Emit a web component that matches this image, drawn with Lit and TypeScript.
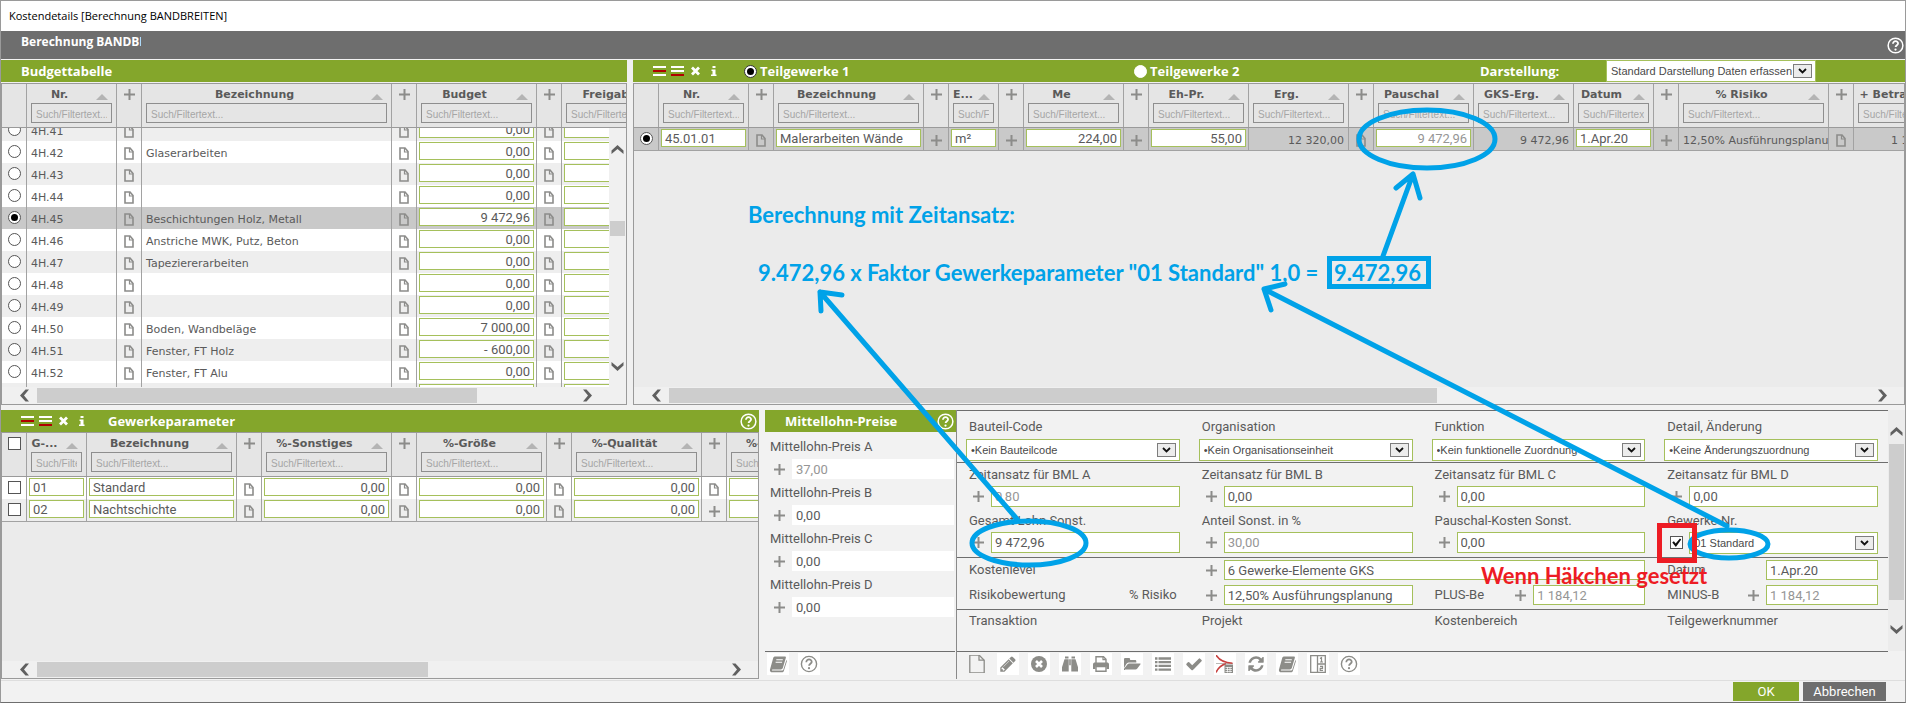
import { LitElement, html, css, svg, nothing, type TemplateResult } from 'lit';
import { customElement, property } from 'lit/decorators.js';
import { classMap } from 'lit/directives/class-map.js';

/* ---------- icons ---------- */

const plusIcon = html`<svg class="plus" viewBox="0 0 11 11" width="11" height="11" aria-hidden="true"><path d="M5.500 0v11M0 5.500h11" stroke="#8c8c8a" stroke-width="2"/></svg>`;

const docIcon = html`<svg class="doc" viewBox="0 0 10 13" width="10" height="13" aria-hidden="true"><path d="M1 1h5l3 3.500V12H1z" fill="none" stroke="#8c8c8a" stroke-width="1.600"/><path d="M5.500 1v4H9" fill="none" stroke="#8c8c8a" stroke-width="1.200"/></svg>`;

const sortIcon = html`<svg class="sort" viewBox="0 0 12 6" width="12" height="6" aria-hidden="true"><path d="M0 6L6 0l6 6z" fill="#b4b4b4"/></svg>`;

const helpIcon = (color: string, size: number) => html`<svg viewBox="0 0 18 18" width=${size} height=${size} aria-hidden="true">
  <circle cx="9" cy="9" r="7.800" fill="none" stroke=${color} stroke-width="1.600"/>
  <path d="M6.300 7.200c0-3.800 5.600-3.400 5.400-.3-.1 1.800-2.600 1.900-2.600 3.800" fill="none" stroke=${color} stroke-width="1.900"/>
  <circle cx="9" cy="13.300" r="1.200" fill=${color}/></svg>`;

const chevron = (dir: 'left' | 'right' | 'up' | 'down') => {
  const turn = { left: 0, up: 90, right: 180, down: 270 }[dir];
  return html`<svg viewBox="0 0 13 13" width="13" height="13" aria-hidden="true"><path transform="rotate(${turn} 6.500 6.500)" d="M7.500 .5h3.500L6 6.500l5 6H7.500L2 6.500z" fill="#606060"/></svg>`;
};

const headTools = html`
  <button class="tool" aria-label="Zeile oberhalb einfügen"><svg viewBox="0 0 13 10" width="13" height="10"><path d="M0 1h13M0 9h13" stroke="#fff" stroke-width="2"/><path d="M0 5h13" stroke="#b00000" stroke-width="2"/></svg></button>
  <button class="tool" aria-label="Zeile unterhalb einfügen"><svg viewBox="0 0 13 10" width="13" height="10"><path d="M0 1h13M0 5h13" stroke="#fff" stroke-width="2"/><path d="M0 9h13" stroke="#b00000" stroke-width="2"/></svg></button>
  <button class="tool" aria-label="Löschen"><svg viewBox="0 0 11 10" width="13" height="10"><path d="M2 1.500l7 7M9 1.500l-7 7" stroke="#fff" stroke-width="2.800"/></svg></button>
  <button class="tool" aria-label="Info"><svg viewBox="0 0 13 10" width="13" height="10"><path d="M5.500 0h3v2h-3zM4.500 3.500h4V8.500h1V10h-5.500V8.500h1.500V5H4.500z" fill="#fff"/></svg></button>`;

const G = '#8c8c88';
const fa = (d: string) => svg`<g transform="scale(.01005)"><path d=${d} fill=${G}/></g>`;
const book = svg`<path d="M6.300 1.500h9.500c.9 0 1.300.6 1 1.500l-3 10c-.3.900-1 1.400-2 1.400H3.600c-1 0-.9 1.200 0 1.200h9.500c.7 0 1.100-.4 1.300-1l3-9.600c.5.400.6.900.4 1.500l-2.900 9.200c-.3 1-1.100 1.500-2 1.500H3.200C1.600 17.200.6 16 1 14.500L4.200 3c.3-1 1-1.500 2.100-1.500z" fill=${G}/><path d="M7.300 4.700h6.500M6.600 7.200h6.500" stroke="#fff" stroke-width="1.100"/>`;
const help = svg`<circle cx="9" cy="9" r="7.600" fill="none" stroke=${G} stroke-width="1.400"/><path d="M6.300 7.200c0-3.800 5.600-3.400 5.400-.3-.1 1.800-2.600 1.900-2.600 3.800" fill="none" stroke=${G} stroke-width="1.800"/><circle cx="9" cy="13.200" r="1.100" fill=${G}/>`;

const toolIcons: Record<string, unknown> = {
  Handbuch: book,
  Hilfe: help,
  Neu: svg`<path d="M1.800 0h9.200l5.200 5.200V18H1.800z" fill="#f2f2f2" stroke=${G} stroke-width="1.300"/><path d="M11 0v5.200h5.200" fill="none" stroke=${G} stroke-width="1.300"/>`,
  Bearbeiten: fa('M491 1536l91-91-235-235-91 91v107h128v128h107zm523-928q0-22-22-22-10 0-17 7l-542 542q-7 7-7 17 0 22 22 22 10 0 17-7l542-542q7-7 7-17zm-54-192l416 416-832 832h-416v-416zm683 96q0 53-37 90l-166 166-416-416 166-165q36-38 90-38 53 0 91 38l235 234q37 39 37 91z'),
  Verwerfen: svg`<circle cx="9" cy="9" r="8" fill=${G}/><path d="M6 6l6 6M12 6l-6 6" stroke="#fff" stroke-width="2.600"/>`,
  Suchen: svg`<path d="M4 1.500h3.500V3.500H4zM10.500 1.500H14V3.500h-3.500zM3.500 4.300h4.200V16.500H1v-4.200zM10.300 4.300h4.200L17 12.300v4.200h-6.700zM8.200 4.300h1.600v6H8.200z" fill=${G}/>`,
  Drucken: svg`<path d="M4 8V1.700h7.500L14 4.200V8" fill="#fff" stroke=${G} stroke-width="1.400"/><path d="M11 1.700v3h3" fill="none" stroke=${G} stroke-width="1.200"/><path d="M1 9.500C1 8 2 7.500 3 7.500h12c1 0 2 .5 2 2V14h-2.500v-2.500h-11V14H1z" fill=${G}/><path d="M4 11.500h10v4.800H4z" fill="#fff" stroke=${G} stroke-width="1.400"/>`,
  Öffnen: svg`<path d="M1 13V4.300C1 3.300 1.600 3 2.300 3h3.500c.8 0 1.300.4 1.300 1.300V5H12c.8 0 1.300.5 1.300 1.300V7.500H6.500c-1.300 0-2.200.4-3 1.300z" fill=${G}/><path d="M4.600 9.300c.4-.5.900-.8 1.700-.8h10.500c.8 0 1 .5.500 1.100l-3 3.900c-.5.600-1.100.9-1.900.9H1.600c-.7 0-.8-.4-.4-.9z" fill=${G}/>`,
  Liste: svg`<path d="M1 3.500h2.500M1 7.200h2.500M1 10.900h2.500M1 14.600h2.500M4.500 3.500h12.500M4.500 7.200h12.500M4.500 10.900h12.500M4.500 14.600h12.500" stroke=${G} stroke-width="2.300"/>`,
  Bestätigen: fa('M1671 566q0 40-28 68l-724 724-136 136q-28 28-68 28t-68-28l-136-136-362-362q-28-28-28-68t28-68l136-136q28-28 68-28t68 28l294 295 656-657q28-28 68-28t68 28l136 136q28 28 28 68z'),
  Kurvenrechner: svg`<path d="M0 8.500h17" stroke="#b9b9b6" stroke-width="1"/><path d="M0 0c3 5 7 7.600 16.500 8.300M0 17.500c2-4.500 5-7.500 10-8.800" fill="none" stroke="#c8413f" stroke-width="1.600"/><path d="M8.500 9.500h8.500v8.500H8.500z" fill=${G}/><path d="M9.500 12.500h6.500M9.500 14.500h6.500M9.500 16.500h6.500M11.500 12v5.500M14 12v5.500" stroke="#fff" stroke-width=".7"/>`,
  Aktualisieren: fa('M1639 1056q0 5-1 7-64 268-268 434.500t-478 166.500q-146 0-282.500-55t-243.500-157l-129 129q-19 19-45 19t-45-19-19-45v-448q0-26 19-45t45-19h448q26 0 45 19t19 45-19 45l-137 137q71 66 161 102t187 36q134 0 250-65t186-179q11-17 53-117 8-23 30-23h192q13 0 22.500 9.500t9.500 22.500zm25-800v448q0 26-19 45t-45 19h-448q-26 0-45-19t-19-45 19-45l138-138q-148-137-349-137-134 0-250 65t-186 179q-11 17-53 117-8 23-30 23h-199q-13 0-22.500-9.500t-9.500-22.500v-7q65-268 270-434.500t480-166.500q146 0 284 55.500t245 156.500l130-129q19-19 45-19t45 19 19 45z'),
  Aufteilen: svg`<path d="M1.700 .7h14.600v16.600H1.700zM8.500 .7v16.600M8.500 9h7.800" fill="none" stroke=${G} stroke-width="1.300"/><path d="M11 3.500l1.500-1v4.500M11 7h3M11 11.300h2.500v2H11.200v2h2.800" fill="none" stroke=${G} stroke-width="1.200"/>`,
};

const toolButton = (name: string) => html`<button class=${classMap({ icon: true, plain: name === 'Neu' })} aria-label=${name}><svg viewBox="0 0 18 18" width="18" height="18" aria-hidden="true">${toolIcons[name]}</svg></button>`;

/* ---------- shared styles ---------- */

const base = css`
  *, *::before, *::after { box-sizing: border-box; }
  button { border: 0; padding: 0; margin: 0; background: none; display: grid; place-items: center; cursor: pointer; }
  svg { display: block; }
  input, select { font: inherit; color: inherit; margin: 0; border-radius: 0; outline: 0; }
  input[type='radio'], input[type='checkbox'] {
    appearance: none; flex: none; display: grid; place-items: center;
    width: 13px; height: 13px; border: 1px solid #555; background: #fff;
  }
  input[type='radio'] { border-radius: 50%; }
  input[type='radio']:checked::before { content: ''; width: 7px; height: 7px; border-radius: 50%; background: #000; }
  input[type='checkbox']:checked::before { content: ''; width: 9px; height: 9px; background: #111; clip-path: polygon(0 50%, 18% 35%, 38% 60%, 85% 5%, 100% 18%, 40% 100%); }
  .text { width: 100%; min-width: 0; background: #fff; border: 1px solid #a5c05b; color: #5a5a5a; font: 13px/16px Roboto, sans-serif; padding: 0 3px; }
  .dim { color: #969696; }
  .right { text-align: right; }
`;

/* ---------- grid ---------- */

type Col = { w: number; label?: string; kind?: 'plus' | 'check' };
type Cell = { k: 'radio' | 'check' | 'text' | 'input' | 'doc' | 'plus'; v?: string; right?: boolean; dim?: boolean; on?: boolean };
type Row = { cells: Cell[]; selected?: boolean };

@customElement('cost-grid')
export class CostGrid extends LitElement {
  @property({ attribute: false }) cols: Col[] = [];
  @property({ attribute: false }) rows: Row[] = [];
  @property() name = '';
  @property({ type: Number }) thumb = 50;
  @property({ type: Boolean }) vertical = false;

  static styles = [base, css`
    :host { display: flex; flex-direction: column; flex: 1; min-height: 0; min-width: 0; border: 1px solid #9a9a9a; background: #ebebeb; }
    .head { overflow: hidden; border-bottom: 1px solid #9a9a9a; background: #e5e5e5; flex: none; }
    .mid { flex: 1; display: flex; min-height: 0; }
    .body { flex: 1; min-width: 0; overflow: hidden; }
    table { table-layout: fixed; border-collapse: separate; border-spacing: 0; }
    .scrolled { margin-top: -9px; }
    th { height: 43px; padding: 1px 4px 0; vertical-align: top; border-right: 1px solid #a2a2a2; font: bold 11px/16px 'DejaVu Sans', sans-serif; color: #5a5a5a; }
    th .plus { margin: 4px auto 0; }
    th input[type='checkbox'] { margin: 3px auto 0; }
    .cap { display: flex; align-items: center; height: 18px; padding: 2px 4px 0 0; gap: 8px; }
    .cap span { flex: 1; min-width: 0; white-space: nowrap; }
    .sort { flex: none; margin-top: 4px; }
    .filter { width: 100%; height: 20px; background: transparent; border: 1px solid #8e8e8e; padding: 2px 4px 0; font: 10px/14px 'Liberation Sans', sans-serif; }
    .filter::placeholder { color: #a6a6a6; opacity: 1; }
    td { height: 22px; padding: 0; border-right: 1px solid #a2a2a2; background: #eee; font: 11px/18px 'DejaVu Sans', sans-serif; color: #5a5a5a; white-space: nowrap; overflow: hidden; vertical-align: top; }
    .alt td { background: #fff; }
    .selected td { background: #c9c9c9; }
    .last td { border-bottom: 1px solid #a2a2a2; height: 23px; }
    td.label { padding: 4px 4px 0; }
    td .text { display: block; height: 18px; }
    td.field { padding: 1px 2px 0; }
    td input[type='radio'], td input[type='checkbox'] { margin: 4px auto 0; }
    td .doc { margin: 6px auto 0; }
    td .plus { margin: 7px auto 0; }
    .vbar { width: 17px; background: #f0f0f0; display: flex; flex-direction: column; align-items: center; padding: 15px 0 14px; }
    .vtrack { flex: 1; width: 100%; display: flex; flex-direction: column; }
    .vspace { flex: 65; }
    .vthumb { flex: 15; background: #cdcdcd; margin: 0 1px; }
    .vrest { flex: 124; }
    .hbar { flex: none; display: flex; height: 17px; background: #f0f0f0; }
    .hbar button { width: 35px; padding-left: 9px; }
    .hbar button.next { padding: 0 9px 0 0; }
    .htrack { flex: 1; padding: 1px 0; }
    .hthumb { height: 15px; background: #cdcdcd; }
    .corner { width: 17px; }
  `];

  private cell(c: Cell, i: number, r: number) {
    const name = `${this.cols[i].label ?? 'Auswahl'} ${r + 1}`;
    switch (c.k) {
      case 'radio': return html`<td><input type="radio" name="row" aria-label=${name} .checked=${!!c.on}></td>`;
      case 'check': return html`<td><input type="checkbox" aria-label=${name}></td>`;
      case 'doc': return html`<td>${docIcon}</td>`;
      case 'plus': return html`<td>${plusIcon}</td>`;
      case 'input': return html`<td class="field"><input class=${classMap({ text: true, right: !!c.right, dim: !!c.dim })} aria-label=${name} .value=${c.v ?? ''}></td>`;
      default: return html`<td class=${classMap({ label: true, right: !!c.right })}>${c.v}</td>`;
    }
  }

  private th(c: Col) {
    if (c.kind === 'plus') return html`<th>${plusIcon}</th>`;
    if (c.kind === 'check') return html`<th><input type="checkbox" aria-label="Alle auswählen"></th>`;
    if (!c.label) return html`<th></th>`;
    return html`<th><div class="cap"><span>${c.label}</span>${sortIcon}</div><input class="filter" placeholder="Such/Filtertext..." aria-label="Filter ${c.label}"></th>`;
  }

  render() {
    const total = this.cols.reduce((s, c) => s + c.w, 0);
    const group = html`<colgroup>${this.cols.map(c => html`<col style="width:${c.w}px">`)}</colgroup>`;
    return html`
      <div class="head"><table style="width:${total}px" aria-label="${this.name} Spalten">${group}<thead><tr>${this.cols.map(c => this.th(c))}</tr></thead></table></div>
      <div class="mid">
        <div class="body">
          <table style="width:${total}px" class=${classMap({ scrolled: this.vertical })} aria-label=${this.name}>${group}<tbody>
            ${this.rows.map((r, n) => html`<tr class=${classMap({ alt: (n % 2 === 1) === this.vertical, selected: !!r.selected, last: n === this.rows.length - 1 })}>${r.cells.map((c, i) => this.cell(c, i, n))}</tr>`)}
          </tbody></table>
        </div>
        ${this.vertical ? html`<div class="vbar"><button aria-label="Nach oben">${chevron('up')}</button><div class="vtrack"><div class="vspace"></div><div class="vthumb"></div><div class="vrest"></div></div><button aria-label="Nach unten">${chevron('down')}</button></div>` : nothing}
      </div>
      <div class="hbar">
        <button aria-label="Nach links">${chevron('left')}</button>
        <div class="htrack"><div class="hthumb" style="width:${this.thumb}%"></div></div>
        <button class="next" aria-label="Nach rechts">${chevron('right')}</button>
        ${this.vertical ? html`<div class="corner"></div>` : nothing}
      </div>`;
  }
}

/* ---------- data ---------- */

const plusCol: Col = { w: 25, kind: 'plus' };
const DOC: Cell = { k: 'doc' };
const PLUS: Cell = { k: 'plus' };
const num = (v: string, dim = false): Cell => ({ k: 'input', v, right: true, dim });

const budgetCols: Col[] = [
  { w: 25 }, { w: 90, label: 'Nr.' }, plusCol, { w: 250, label: 'Bezeichnung' }, plusCol,
  { w: 120, label: 'Budget' }, plusCol, { w: 120, label: 'Freigabe' },
];
const budgetData: [string, string, string][] = [
  ['4H.41', '', '0,00'], ['4H.42', 'Glaserarbeiten', '0,00'], ['4H.43', '', '0,00'], ['4H.44', '', '0,00'],
  ['4H.45', 'Beschichtungen Holz, Metall', '9 472,96'], ['4H.46', 'Anstriche MWK, Putz, Beton', '0,00'],
  ['4H.47', 'Tapeziererarbeiten', '0,00'], ['4H.48', '', '0,00'], ['4H.49', '', '0,00'],
  ['4H.50', 'Boden, Wandbeläge', '7 000,00'], ['4H.51', 'Fenster, FT Holz', '- 600,00'],
  ['4H.52', 'Fenster, FT Alu', '0,00'], ['', '', ''],
];
const budgetRows: Row[] = budgetData.map(([nr, name, sum]) => {
  const on = nr === '4H.45';
  return { selected: on, cells: [{ k: 'radio', on }, { k: 'text', v: nr }, DOC, { k: 'text', v: name }, DOC, num(sum), DOC, num('')] };
});

const partCols: Col[] = [
  { w: 25 }, { w: 90, label: 'Nr.' }, plusCol, { w: 150, label: 'Bezeichnung' }, plusCol, { w: 50, label: 'E...' }, plusCol,
  { w: 100, label: 'Me' }, plusCol, { w: 100, label: 'Eh-Pr.' }, { w: 100, label: 'Erg.' }, plusCol,
  { w: 100, label: 'Pauschal' }, { w: 100, label: 'GKS-Erg.' }, { w: 80, label: 'Datum' }, plusCol,
  { w: 150, label: '% Risiko' }, plusCol, { w: 91, label: '+ Betrag' },
];
const partRows: Row[] = [{
  selected: true,
  cells: [
    { k: 'radio', on: true }, { k: 'input', v: '45.01.01' }, DOC, { k: 'input', v: 'Malerarbeiten Wände' }, PLUS, { k: 'input', v: 'm²' }, PLUS,
    num('224,00'), PLUS, num('55,00'), { k: 'text', v: '12 320,00', right: true }, DOC, num('9 472,96', true),
    { k: 'text', v: '9 472,96', right: true }, { k: 'input', v: '1.Apr.20' }, PLUS, { k: 'text', v: '12,50% Ausführungsplanung' }, DOC,
    { k: 'text', v: '1 184,12', right: true },
  ],
}];

const paramCols: Col[] = [
  { w: 25, kind: 'check' }, { w: 60, label: 'G-...' }, { w: 150, label: 'Bezeichnung' }, plusCol, { w: 130, label: '%-Sonstiges' }, plusCol,
  { w: 130, label: '%-Größe' }, plusCol, { w: 130, label: '%-Qualität' }, plusCol, { w: 130, label: '%-Material' },
];
const paramRows: Row[] = [['01', 'Standard', DOC], ['02', 'Nachtschichte', PLUS]].map(([nr, name, mark]) => ({
  cells: [{ k: 'check' }, { k: 'input', v: nr as string }, { k: 'input', v: name as string }, DOC, num('0,00'), DOC, num('0,00'), DOC, num('0,00'), mark as Cell, num('')],
}));

const wages: [string, string, boolean][] = [['A', '37,00', true], ['B', '0,00', false], ['C', '0,00', false], ['D', '0,00', false]];

/* ---------- application ---------- */

@customElement('app-root')
export class AppRoot extends LitElement {
  static styles = [base, css`
    :host { display: flex; flex-direction: column; position: relative; height: 100vh; background: #f2f2f2; border: 1px solid #9a9a9a; border-bottom-color: #6e6e6e; color: #5a5a5a; font: 13px/18px Roboto, sans-serif; box-sizing: border-box; overflow: hidden; }
    .window-title { flex: none; height: 30px; padding: 0 8px; background: #fff; color: #000; font: 11px/30px 'Open Sans', sans-serif; }
    .bar { flex: none; height: 28px; background: #6e6e6e; display: flex; justify-content: space-between; padding: 0 1px 0 20px; }
    .bar h1 { margin: 0; width: 120px; overflow: hidden; white-space: nowrap; color: #fff; font: bold 12px/22px 'Open Sans', sans-serif; }
    .top, .bottom { display: grid; grid-template-rows: minmax(0, 1fr); min-height: 0; }
    .top { flex: 345 1 0; grid-template-columns: minmax(0, 626fr) minmax(0, 1272fr); gap: 6px; margin-top: 1px; background: #f0f0f0; }
    .bottom { flex: 269 1 0; grid-template-columns: minmax(0, 764fr) minmax(0, 191fr) minmax(0, 949fr); margin-top: 5px; }
    .panel { display: flex; flex-direction: column; min-width: 0; min-height: 0; }
    .top .green { margin-bottom: 1px; }
    .params { padding-right: 6px; }
    .green { flex: none; height: 22px; background: #84a62b; color: #fff; display: flex; align-items: center; padding: 0 2px 0 20px; font: bold 13px/22px 'Open Sans', sans-serif; white-space: nowrap; }
    .green h2 { margin: 0; font: inherit; }
    .tools { display: flex; gap: 5px; margin-right: 20px; }
    .tool { width: 13px; height: 22px; }
    .push { margin-left: auto; }
    .choice { display: flex; align-items: center; gap: 3px; }
    .choice input { border-color: #fff; }
    .choice input:checked { border-color: #333; }
    .parts .choice { flex: 0 0 31.2%; }
    .parts .second { flex: 1; }
    .parts .view { flex: 0 0 126px; }
    .parts .tools { margin-right: 24px; }
    .drop { display: grid; align-items: center; height: 22px; background: #fff; border: 1px solid #a5c05b; min-width: 0; width: 100%; }
    .parts .drop { flex: 0 0 210px; margin-right: 87px; }
    .drop select, .drop .arrow { grid-area: 1 / 1; }
    .drop select { appearance: none; width: 100%; min-width: 0; height: 20px; border: 0; background: none; padding: 0 22px 0 4px; font: 11px/18px 'Liberation Sans', sans-serif; color: #4a4a4a; }
    .arrow { justify-self: end; margin-right: 3px; width: 19px; height: 14px; border: 1px solid #7d7d7d; background: #ececec; display: grid; place-items: center; pointer-events: none; }

    .wages, .details { display: flex; flex-direction: column; min-height: 0; min-width: 0; }
    .wage-list { flex: 1; min-height: 0; padding: 6px 2px 0 5px; }
    .wage { display: grid; grid-template-columns: 22px 1fr; margin-bottom: 5px; align-items: center; row-gap: 3px; }
    .wage label { grid-column: 1 / 3; }
    .wage .text { height: 20px; border-color: #fff; }
    .wage .plus { margin-left: 4px; }
    .toolbar { flex: none; height: 28px; display: flex; gap: 9px; padding: 1px 2px 0; border-top: 1px solid #6e6e6e; }
    .wages .toolbar { margin-right: 1px; }
    .icon { width: 22px; height: 22px; background: #fff; }
    .icon.plain { background: none; }
    .details { border-left: 1px solid #8a8a8a; }
    .details .toolbar { padding-left: 9px; margin-right: 17px; }
    .form-area { flex: 1; display: flex; min-height: 0; }
    .form { flex: 1; min-width: 0; border-top: 1px solid #6e6e6e; }
    .section { display: grid; grid-template-columns: repeat(4, minmax(0, 1fr)); border-bottom: 1px solid #6e6e6e; }
    .section.codes { padding: 7px 0 1px; }
    .section.codes .control { margin-top: 3px; }
    .section.times { padding-bottom: 2px; }
    .section.times .field { height: 46px; padding-top: 3px; }
    .section.times .control { margin-top: 2px; }
    .section.risk { padding: 2px 0 4px; row-gap: 5px; align-items: center; }
    .section.info { border: 0; padding-top: 2px; }
    .field { padding: 0 10px 0 9px; min-width: 0; }
    .field > label, .name { padding: 0 3px; display: block; white-space: nowrap; }
    .control { display: flex; align-items: flex-start; }
    .control .text { height: 21px; padding-left: 3px; }
    .mark { flex: 0 0 25px; height: 21px; display: grid; place-items: center; }
    .inline { display: flex; align-items: center; padding: 0 10px 0 9px; }
    .inline .text, .inline .mark { height: 20px; }
    .inline .name:first-child { flex: 1; min-width: 0; }
    .inline .short { flex: 0 0 112px; width: 112px; }
    .two { grid-column: 2 / 4; }
    .scroll { width: 17px; background: #ececec; display: flex; flex-direction: column; align-items: center; padding: 15px 1px 15px; }
    .thumb { flex: 156; align-self: stretch; background: #cdcdcd; margin-top: 6px; }
    .rest { flex: 23; }
    .footer { flex: none; height: 22px; margin-top: 1px; border-top: 1px solid #dedede; display: flex; justify-content: flex-end; gap: 4px; padding: 1px 19px 1px 0; }
    .footer button { color: #fff; font: 13px/19px Roboto, sans-serif; }
    .ok { width: 66px; background: #84a62b; }
    .cancel { width: 83px; background: #6e6e6e; }
    .notes { position: absolute; inset: -1px; width: calc(100% + 2px); pointer-events: none; }
    .notes text { font: bold 22px Lato, sans-serif; fill: #00a2e8; }
    .notes .warn { fill: #ed1c24; }
    .ink { fill: none; stroke: #00a2e8; stroke-width: 5; stroke-linecap: round; stroke-linejoin: round; }
    .box { stroke-linejoin: miter; }
    .red { stroke: #ed1c24; }
  `];

  private drop(id: string, value: string) {
    return html`<div class="drop"><select id=${id}><option>${value}</option></select><span class="arrow"><svg viewBox="0 0 9 6" width="9" height="6"><path d="M1 1l3.500 3.500L8 1" fill="none" stroke="#111" stroke-width="1.800"/></svg></span></div>`;
  }

  private pick(id: string, label: string, value: string) {
    return html`<div class="field"><label for=${id}>${label}</label><div class="control">${this.drop(id, value)}</div></div>`;
  }

  private amount(id: string, label: string, value: string, dim = false) {
    return html`<div class="field"><label for=${id}>${label}</label><div class="control"><span class="mark">${plusIcon}</span><input id=${id} class=${classMap({ text: true, dim })} .value=${value}></div></div>`;
  }

  private notes(): TemplateResult {
    return html`<svg class="notes" viewBox="0 0 1906 703" role="img" aria-label="Anmerkungen zur Berechnung">
      <text x="748" y="223">Berechnung mit Zeitansatz:</text>
      <text x="758" y="281">9.472,96 x Faktor Gewerkeparameter "01 Standard" 1,0 =</text>
      <text x="1334" y="281">9.472,96</text>
      <text class="warn" x="1481" y="584">Wenn Häkchen gesetzt</text>
      <g class="ink">
        <ellipse cx="1427" cy="139" rx="68" ry="29"/>
        <path d="M1383 256L1413 174M1396 188L1413 174L1420 198"/>
        <rect class="box" x="1329.500" y="258.500" width="99" height="28"/>
        <path d="M1017 519L820 292M842 295L820 292L821 311"/>
        <ellipse cx="1029" cy="543" rx="57" ry="22"/>
        <path d="M1727 526L1264 289M1285 284L1264 289L1271 310"/>
        <ellipse cx="1729" cy="544" rx="39" ry="14"/>
        <rect class="box red" x="1659.500" y="525.500" width="35" height="35"/>
      </g></svg>`;
  }

  render() {
    return html`
      <div class="window-title">Kostendetails [Berechnung BANDBREITEN]</div>
      <header class="bar"><h1>Berechnung BANDBREITEN</h1><button aria-label="Hilfe">${helpIcon('#fff', 17)}</button></header>

      <div class="top">
        <section class="panel">
          <div class="green"><h2>Budgettabelle</h2></div>
          <cost-grid name="Budgettabelle" .cols=${budgetCols} .rows=${budgetRows} thumb="82" vertical></cost-grid>
        </section>
        <section class="panel parts">
          <div class="green">
            <div class="tools">${headTools}</div>
            <label class="choice"><input type="radio" name="parts" checked>Teilgewerke 1</label>
            <label class="choice second"><input type="radio" name="parts">Teilgewerke 2</label>
            <label class="view" for="view">Darstellung:</label>
            ${this.drop('view', 'Standard Darstellung Daten erfassen')}
          </div>
          <cost-grid name="Teilgewerke" .cols=${partCols} .rows=${partRows} thumb="64"></cost-grid>
        </section>
      </div>

      <div class="bottom">
        <section class="panel params">
          <div class="green"><div class="tools">${headTools}</div><h2>Gewerkeparameter</h2><button class="push" aria-label="Hilfe">${helpIcon('#fff', 17)}</button></div>
          <cost-grid name="Gewerkeparameter" .cols=${paramCols} .rows=${paramRows} thumb="57"></cost-grid>
        </section>

        <section class="wages">
          <div class="green"><h2>Mittellohn-Preise</h2><button class="push" aria-label="Hilfe">${helpIcon('#fff', 17)}</button></div>
          <div class="wage-list">
            ${wages.map(([k, v, dim]) => html`<div class="wage"><label for="wage-${k}">Mittellohn-Preis ${k}</label>${plusIcon}<input id="wage-${k}" class=${classMap({ text: true, dim })} .value=${v}></div>`)}
          </div>
          <div class="toolbar">${['Handbuch', 'Hilfe'].map(toolButton)}</div>
        </section>

        <section class="details">
          <div class="form-area">
            <div class="form">
              <div class="section codes">
                ${this.pick('code', 'Bauteil-Code', '•Kein Bauteilcode')}
                ${this.pick('org', 'Organisation', '•Kein Organisationseinheit')}
                ${this.pick('func', 'Funktion', '•Kein funktionelle Zuordnung')}
                ${this.pick('change', 'Detail, Änderung', '•Keine Änderungszuordnung')}
              </div>
              <div class="section times">
                ${this.amount('ta', 'Zeitansatz für BML A', '0,80', true)}
                ${this.amount('tb', 'Zeitansatz für BML B', '0,00')}
                ${this.amount('tc', 'Zeitansatz für BML C', '0,00')}
                ${this.amount('td', 'Zeitansatz für BML D', '0,00')}
                ${this.amount('total', 'Gesamt Lohn Sonst.', '9 472,96')}
                ${this.amount('share', 'Anteil Sonst. in %', '30,00', true)}
                ${this.amount('flat', 'Pauschal-Kosten Sonst.', '0,00')}
                <div class="field"><label for="trade">Gewerke-Nr.</label><div class="control"><span class="mark"><input type="checkbox" aria-label="Gewerke-Nr. verwenden" checked></span>${this.drop('trade', '01 Standard')}</div></div>
              </div>
              <div class="section risk">
                <div class="inline"><label class="name" for="level">Kostenlevel</label></div>
                <div class="inline two"><span class="mark">${plusIcon}</span><input id="level" class="text" .value=${'6 Gewerke-Elemente GKS'}></div>
                <div class="inline"><label class="name" for="date">Datum</label><input id="date" class="text short" .value=${'1.Apr.20'}></div>
                <div class="inline"><span class="name">Risikobewertung</span><label class="name" for="risk">% Risiko</label></div>
                <div class="inline"><span class="mark">${plusIcon}</span><input id="risk" class="text" .value=${'12,50% Ausführungsplanung'}></div>
                <div class="inline"><label class="name" for="plus">PLUS-Be</label><span class="mark">${plusIcon}</span><input id="plus" class="text short dim" .value=${'1 184,12'}></div>
                <div class="inline"><label class="name" for="minus">MINUS-B</label><span class="mark">${plusIcon}</span><input id="minus" class="text short dim" .value=${'1 184,12'}></div>
              </div>
              <div class="section info">
                ${['Transaktion', 'Projekt', 'Kostenbereich', 'Teilgewerknummer'].map(t => html`<div class="field"><span class="name">${t}</span></div>`)}
              </div>
            </div>
            <div class="scroll"><button aria-label="Nach oben">${chevron('up')}</button><div class="thumb"></div><div class="rest"></div><button aria-label="Nach unten">${chevron('down')}</button></div>
          </div>
          <div class="toolbar">${['Neu', 'Bearbeiten', 'Verwerfen', 'Suchen', 'Drucken', 'Öffnen', 'Liste', 'Bestätigen', 'Kurvenrechner', 'Aktualisieren', 'Handbuch', 'Aufteilen', 'Hilfe'].map(toolButton)}</div>
        </section>
      </div>

      <footer class="footer"><button class="ok">OK</button><button class="cancel">Abbrechen</button></footer>
      ${this.notes()}`;
  }
}
